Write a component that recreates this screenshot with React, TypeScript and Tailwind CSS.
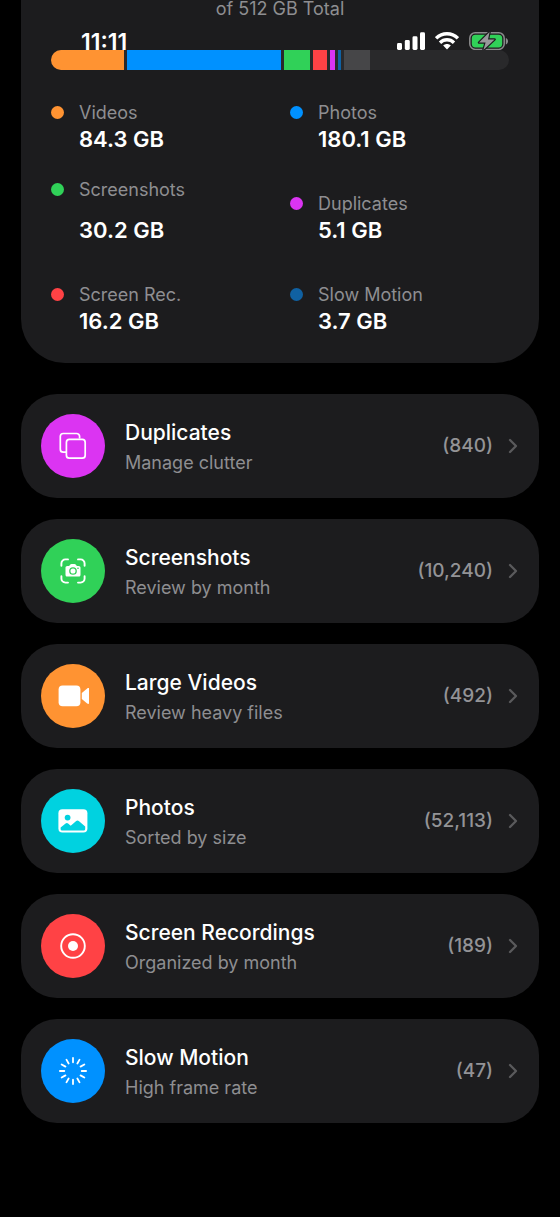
import { ReactNode } from 'react';
import { ChevronRight } from 'lucide-react';
import clsx from 'clsx';

interface StorageItem {
  label: string;
  size: string;
  dot: string;
  spread?: boolean;
}

interface CategoryRowProps {
  title: string;
  subtitle: string;
  count: string;
  color: string;
  icon: ReactNode;
}

const SEGMENTS = [
  { id: 'videos', gb: 84.3, color: 'bg-[#ff9332]' },
  { id: 'photos', gb: 180.1, color: 'bg-[#0091ff]' },
  { id: 'screenshots', gb: 30.2, color: 'bg-[#30d158]' },
  { id: 'recordings', gb: 16.2, color: 'bg-[#ff4245]' },
  { id: 'duplicates', gb: 5.1, color: 'bg-[#db34f2]' },
  { id: 'slow-motion', gb: 3.7, color: 'bg-[#1061a2]' },
  { id: 'other', gb: 30, color: 'bg-[#464648]' },
  { id: 'free', gb: 158.4, color: 'bg-transparent' },
];

const STORAGE_ITEMS: StorageItem[] = [
  { label: 'Videos', size: '84.3 GB', dot: 'bg-[#ff9332]' },
  { label: 'Photos', size: '180.1 GB', dot: 'bg-[#0091ff]' },
  { label: 'Screenshots', size: '30.2 GB', dot: 'bg-[#30d158]', spread: true },
  { label: 'Duplicates', size: '5.1 GB', dot: 'bg-[#db34f2]' },
  { label: 'Screen Rec.', size: '16.2 GB', dot: 'bg-[#ff4245]' },
  { label: 'Slow Motion', size: '3.7 GB', dot: 'bg-[#1061a2]' },
];

const SPOKES = [0, 30, 60, 90, 120, 150, 180, 210, 240, 270, 300, 330];

const CATEGORIES: CategoryRowProps[] = [
  {
    title: 'Duplicates',
    subtitle: 'Manage clutter',
    count: '(840)',
    color: 'bg-[#db34f2]',
    icon: (
      <svg viewBox="0 0 32 32" className="size-8" fill="none" stroke="white" strokeWidth="1.7">
        <path d="M9.2 22.2H6.3A3 3 0 0 1 3.3 19.2V6.5A3 3 0 0 1 6.3 3.5H19.6A3 3 0 0 1 22.6 6.5V8.5" />
        <rect x="9.4" y="9.4" width="18.8" height="18.8" rx="3" />
      </svg>
    ),
  },
  {
    title: 'Screenshots',
    subtitle: 'Review by month',
    count: '(10,240)',
    color: 'bg-[#30d158]',
    icon: (
      <svg viewBox="0 0 32 32" className="size-8" fill="none">
        <path
          d="M4.4 10.8V8.4A4 4 0 0 1 8.4 4.4H11M21 4.4h2.6A4 4 0 0 1 27.6 8.4v2.4M27.6 21.2v2.4a4 4 0 0 1-4 4H21M11 27.6H8.4a4 4 0 0 1-4-4v-2.4"
          stroke="white"
          strokeWidth="1.9"
          strokeLinecap="round"
        />
        <path
          d="M10.4 10.9h1.3c.5 0 .8-.2 1.1-.6l.5-.7c.3-.4.7-.6 1.2-.6h3c.5 0 .9.2 1.2.6l.5.7c.3.4.6.6 1.1.6h1.3c1.2 0 1.9.7 1.9 1.9v6.9c0 1.2-.7 1.9-1.9 1.9H10.4c-1.2 0-1.9-.7-1.9-1.9v-6.9c0-1.2.7-1.9 1.9-1.9Z"
          fill="white"
        />
        <circle cx="16" cy="16" r="3.2" stroke="#30d158" strokeWidth="1.3" />
        <circle cx="21" cy="13.3" r="0.8" fill="#30d158" />
      </svg>
    ),
  },
  {
    title: 'Large Videos',
    subtitle: 'Review heavy files',
    count: '(492)',
    color: 'bg-[#ff9332]',
    icon: (
      <svg viewBox="0 0 32 32" className="size-8" fill="white">
        <rect x="1.6" y="5.6" width="21.8" height="20.6" rx="4" />
        <path d="M24.8 13v5.9l5.4 4.6c1 .8 2 .5 2-.7V9.1c0-1.2-1-1.5-2-.7Z" />
      </svg>
    ),
  },
  {
    title: 'Photos',
    subtitle: 'Sorted by size',
    count: '(52,113)',
    color: 'bg-[#00d2e0]',
    icon: (
      <svg viewBox="0 0 32 32" className="size-8">
        <rect x="1.4" y="4.2" width="29" height="23.2" rx="4" fill="white" />
        <circle cx="10.6" cy="12.6" r="2.9" fill="#00d2e0" />
        <path
          d="M3.6 24.2v-1.8l5-3.8c.8-.7 1.7-.7 2.5 0l2.6 2.2 5.2-4.6c1.1-1 2.1-1 3.2 0l6.1 5.4v2.6a1.4 1.4 0 0 1-1.4 1.2H5A1.4 1.4 0 0 1 3.6 24.2Z"
          fill="#00d2e0"
        />
      </svg>
    ),
  },
  {
    title: 'Screen Recordings',
    subtitle: 'Organized by month',
    count: '(189)',
    color: 'bg-[#ff4245]',
    icon: (
      <svg viewBox="0 0 32 32" className="size-8">
        <circle cx="16" cy="16" r="11.8" fill="none" stroke="white" strokeWidth="1.9" />
        <circle cx="16" cy="16" r="5" fill="white" />
      </svg>
    ),
  },
  {
    title: 'Slow Motion',
    subtitle: 'High frame rate',
    count: '(47)',
    color: 'bg-[#0091ff]',
    icon: (
      <svg viewBox="0 0 32 32" className="size-8" stroke="white" strokeWidth="1.8" strokeLinecap="round">
        {SPOKES.map((angle) => (
          <path key={angle} d="M16 2.9v4.4" transform={`rotate(${angle} 16 16)`} />
        ))}
      </svg>
    ),
  },
];

function StatusBar() {
  return (
    <div className="absolute inset-x-0 top-[30px] flex h-5 items-end justify-between pr-[52px] pl-[81px]">
      <span className="text-[23px] leading-4 font-semibold">11:11</span>
      <div className="flex items-end gap-[10px]">
        <svg viewBox="0 0 28 18" className="h-[18px] w-7" fill="white">
          <rect x="0" y="11" width="5" height="7" rx="1.4" />
          <rect x="7.8" y="8" width="5" height="10" rx="1.4" />
          <rect x="15.5" y="4.3" width="5" height="13.7" rx="1.4" />
          <rect x="23" y="0.2" width="5" height="17.8" rx="1.4" />
        </svg>
        <svg viewBox="0 0 24 18" className="h-[18px] w-6" fill="none" stroke="white" strokeWidth="3.4">
          <path d="M1.1 6.4C7.4.2 16.6.2 22.9 6.4" />
          <path d="M5 10.7c4-3.9 10-3.9 14 0" />
          <path d="M8.2 13.6c2.2-2 5.4-2 7.6 0L12 17.4Z" fill="white" stroke="none" />
        </svg>
        <svg viewBox="0 0 39 18" className="h-[18px] w-[39px]">
          <rect x="0.8" y="0.8" width="34.4" height="16.6" rx="5.4" fill="none" stroke="#8b8b8d" strokeWidth="1.5" />
          <path d="M36.8 6v6.4c1.4-.6 2.2-1.8 2.2-3.2s-.8-2.6-2.2-3.2Z" fill="#8b8b8d" />
          <rect x="2.8" y="2.8" width="30.4" height="12.6" rx="3.6" fill="#30d158" />
          <path
            d="M20.6 0 10 10.6h6.6L14.4 18 25.6 7.4H19Z"
            fill="#98989b"
            stroke="#1c1c1e"
            strokeWidth="2.4"
            strokeLinejoin="round"
            paintOrder="stroke"
          />
        </svg>
      </div>
    </div>
  );
}

function StorageLegend({ label, size, dot, spread }: StorageItem) {
  return (
    <div className={clsx('flex gap-[15px] leading-[27px]', spread ? 'self-start' : 'self-center')}>
      <span className={clsx('mt-[7px] size-[13px] shrink-0 rounded-full', dot)} />
      <dl className={clsx('flex flex-col', spread && 'gap-[14px]')}>
        <dt className="text-lg/[27px] text-[#8e8e91]">{label}</dt>
        <dd className="text-[22px] font-semibold">{size}</dd>
      </dl>
    </div>
  );
}

function CategoryRow({ title, subtitle, count, color, icon }: CategoryRowProps) {
  return (
    <button
      type="button"
      className="flex h-[104px] w-full cursor-pointer items-center rounded-[36px] bg-[#1c1c1e] pr-[14px] pl-5 text-left"
    >
      <span className={clsx('flex size-16 shrink-0 items-center justify-center rounded-full', color)}>
        {icon}
      </span>
      <span className="ml-5 flex flex-1 flex-col pt-1">
        <span className="text-[21px] leading-[30px] font-medium text-white">{title}</span>
        <span className="text-lg/[30px] text-[#8e8e91]">{subtitle}</span>
      </span>
      <span className="text-[19px] font-medium text-[#939396]">{count}</span>
      <ChevronRight className="ml-2 size-6 text-[#5a5a5c]" strokeWidth={2.3} />
    </button>
  );
}

export default function App() {
  return (
    <main className="relative min-h-screen bg-black px-[21px] pb-24 font-['Inter','Liberation_Sans',sans-serif] text-white">
      <section className="rounded-b-[44px] bg-[#1c1c1e] px-[30px] pb-7">
        <p className="text-center text-lg/[18px] text-[#8e8e91]">of 512 GB Total</p>
        <StatusBar />
        <div className="relative z-10 mt-8 flex h-5 gap-[3px] overflow-hidden rounded-full bg-[#29292b]">
          {SEGMENTS.map(({ id, gb, color }) => (
            <div key={id} className={clsx('basis-0', color)} style={{ flexGrow: gb }} />
          ))}
        </div>
        <div className="mt-[29px] grid grid-cols-2 grid-rows-[auto_82px_auto] gap-x-5 gap-y-[23px]">
          {STORAGE_ITEMS.map((item) => (
            <StorageLegend key={item.label} {...item} />
          ))}
        </div>
      </section>

      <div className="mt-[31px] flex flex-col gap-[21px]">
        {CATEGORIES.map((category) => (
          <CategoryRow key={category.title} {...category} />
        ))}
      </div>
    </main>
  );
}
